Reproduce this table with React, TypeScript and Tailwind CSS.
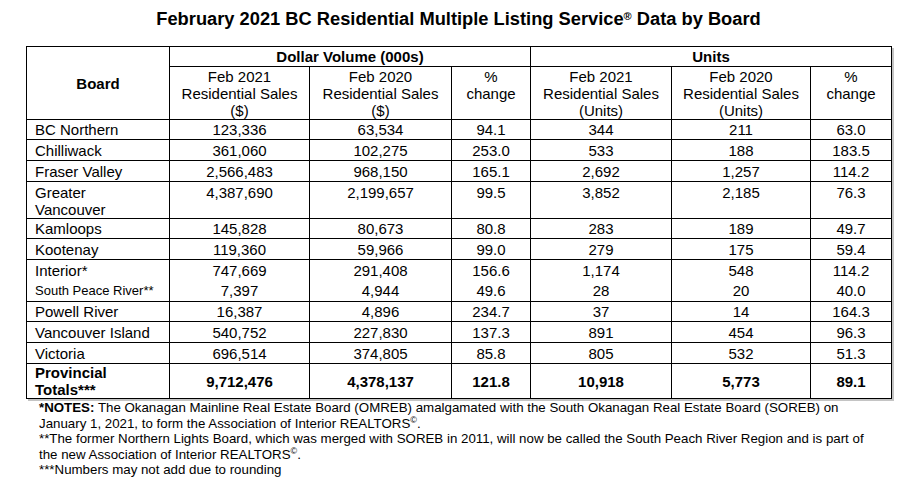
import React from 'react';

type Row = {
  board: React.ReactNode;
  vals: string[];
  h: string;
  noBottom?: boolean;
  small?: boolean;
  top?: boolean;
};

const rows: Row[] = [
  { board: 'BC Northern', vals: ['123,336', '63,534', '94.1', '344', '211', '63.0'], h: 'h-[20px]' },
  { board: 'Chilliwack', vals: ['361,060', '102,275', '253.0', '533', '188', '183.5'], h: 'h-[21px]' },
  { board: 'Fraser Valley', vals: ['2,566,483', '968,150', '165.1', '2,692', '1,257', '114.2'], h: 'h-[21px]' },
  {
    board: (
      <>
        Greater
        <br />
        Vancouver
      </>
    ),
    vals: ['4,387,690', '2,199,657', '99.5', '3,852', '2,185', '76.3'],
    h: 'h-[36px]',
    top: true,
  },
  { board: 'Kamloops', vals: ['145,828', '80,673', '80.8', '283', '189', '49.7'], h: 'h-[20px]' },
  { board: 'Kootenay', vals: ['119,360', '59,966', '99.0', '279', '175', '59.4'], h: 'h-[21px]' },
  { board: 'Interior*', vals: ['747,669', '291,408', '156.6', '1,174', '548', '114.2'], h: 'h-[21px]', noBottom: true },
  { board: 'South Peace River**', vals: ['7,397', '4,944', '49.6', '28', '20', '40.0'], h: 'h-[21px]', small: true },
  { board: 'Powell River', vals: ['16,387', '4,896', '234.7', '37', '14', '164.3'], h: 'h-[20px]' },
  { board: 'Vancouver Island', vals: ['540,752', '227,830', '137.3', '891', '454', '96.3'], h: 'h-[21px]' },
  { board: 'Victoria', vals: ['696,514', '374,805', '85.8', '805', '532', '51.3'], h: 'h-[21px]' },
];

export default function App() {
  return (
    <div className="min-h-[497px] w-[908px] bg-white text-black font-['Liberation_Sans',Arial,sans-serif]">
      <div className="ml-[26px] w-[865px] pt-[8px]">
        <h1 className="text-center text-[18.3px] leading-[22px] font-bold">
          February 2021 BC Residential Multiple Listing Service
          <sup className="text-[11px]">®</sup> Data by Board
        </h1>

        <table className="mt-[16px] w-[865px] table-fixed border-collapse border border-black text-[15px] leading-[17px] shadow-[2px_2px_0_#c4c4c4]">
          <colgroup>
            <col className="w-[143px]" />
            <col className="w-[140px]" />
            <col className="w-[142px]" />
            <col className="w-[79px]" />
            <col className="w-[141px]" />
            <col className="w-[139px]" />
            <col className="w-[81px]" />
          </colgroup>
          <thead>
            <tr className="h-[20px]">
              <th rowSpan={2} className="border border-black p-0 align-middle font-bold">
                Board
              </th>
              <th colSpan={3} className="border border-black p-0 font-bold">
                Dollar Volume (000s)
              </th>
              <th colSpan={3} className="border border-black p-0 font-bold">
                Units
              </th>
            </tr>
            <tr className="h-[53px] font-normal">
              <th className="border border-black p-0 align-top pt-[1px] font-normal">
                Feb 2021
                <br />
                Residential Sales
                <br />
                ($)
              </th>
              <th className="border border-black p-0 align-top pt-[1px] font-normal">
                Feb 2020
                <br />
                Residential Sales
                <br />
                ($)
              </th>
              <th className="border border-black p-0 align-top pt-[1px] font-normal">
                %
                <br />
                change
              </th>
              <th className="border border-black p-0 align-top pt-[1px] font-normal">
                Feb 2021
                <br />
                Residential Sales
                <br />
                (Units)
              </th>
              <th className="border border-black p-0 align-top pt-[1px] font-normal">
                Feb 2020
                <br />
                Residential Sales
                <br />
                (Units)
              </th>
              <th className="border border-black p-0 align-top pt-[1px] font-normal">
                %
                <br />
                change
              </th>
            </tr>
          </thead>
          <tbody>
            {rows.map((r, i) => (
              <tr key={i} className={`${r.h} ${r.noBottom ? 'border-b-0' : 'border-b border-black'}`}>
                <td
                  className={`border-x border-black p-0 pl-[8px] ${r.top ? 'align-top pt-[2px]' : 'align-middle'} ${
                    r.small ? 'text-[13px]' : ''
                  }`}
                >
                  {r.board}
                </td>
                {r.vals.map((v, j) => (
                  <td
                    key={j}
                    className={`border-x border-black p-0 text-center ${r.top ? 'align-top pt-[2px]' : 'align-middle'}`}
                  >
                    {v}
                  </td>
                ))}
              </tr>
            ))}
            <tr className="h-[35px] border-b border-black font-bold">
              <td className="border-x border-black p-0 pl-[8px] align-middle">
                Provincial
                <br />
                Totals***
              </td>
              {['9,712,476', '4,378,137', '121.8', '10,918', '5,773', '89.1'].map((v, j) => (
                <td key={j} className="border-x border-black p-0 text-center align-middle">
                  {v}
                </td>
              ))}
            </tr>
          </tbody>
        </table>
      </div>

      <div className="ml-[39px] mt-[1px] text-[13.3px] leading-[15.5px]">
        <p>
          <span className="font-bold">*NOTES:</span> The Okanagan Mainline Real Estate Board (OMREB) amalgamated with the
          South Okanagan Real Estate Board (SOREB) on
          <br />
          January 1, 2021, to form the Association of Interior REALTORS<sup className="text-[9px]">©</sup>.
        </p>
        <p>
          **The former Northern Lights Board, which was merged with SOREB in 2011, will now be called the South Peach River
          Region and is part of
          <br />
          the new Association of Interior REALTORS<sup className="text-[9px]">©</sup>.
        </p>
        <p>***Numbers may not add due to rounding</p>
      </div>
    </div>
  );
}
